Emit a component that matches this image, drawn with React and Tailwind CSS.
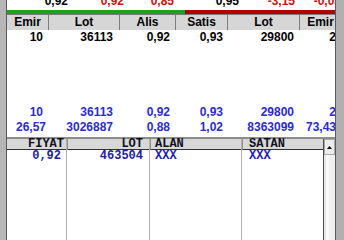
import React from "react";

const sans = { fontFamily: '"Liberation Sans", Arial, sans-serif' };
const mono = { fontFamily: '"Liberation Mono", "Courier New", monospace' };

const cols = [42, 71, 56, 52, 72, 42];
const pads = [6, 7, 6, 5, 6, 6];
const heads = ["Emir", "Lot", "Alis", "Satis", "Lot", "Emir"];

function DataRow({ values, color, extraPad = [] }) {
  return (
    <div className="flex h-[15px] leading-[15px] shrink-0">
      {values.map((v, i) => (
        <div
          key={i}
          className="shrink-0 text-right whitespace-nowrap overflow-hidden"
          style={{ width: cols[i], paddingRight: pads[i] - (extraPad[i] || 0), color }}
        >
          {v}
        </div>
      ))}
    </div>
  );
}

export default function App() {
  const top = [
    ["0,92", 61, "#000000"],
    ["0,92", 56, "#d01010"],
    ["0,85", 50, "#d01010"],
    ["0,95", 65, "#000000"],
    ["-3,15", 56, "#d01010"],
    ["-0,03", 46, "#d01010"],
  ];
  return (
    <div className="w-[344px] h-[240px] flex bg-white overflow-hidden">
      <div className="w-[7px] h-full bg-[#b6b6b6] border-r border-[#5a5a5a] shrink-0" />
      <div className="w-[328px] h-full flex flex-col overflow-hidden shrink-0 text-[12px] font-bold" style={sans}>
        <div className="h-[8px] flex items-end overflow-hidden shrink-0">
          {top.map(([t, w, c], i) => (
            <div key={i} className="shrink-0 text-right leading-[14px] whitespace-nowrap" style={{ width: w, color: c }}>
              {t}
            </div>
          ))}
        </div>
        <div className="h-[2px] shrink-0" />
        <div className="h-[4px] flex shrink-0">
          <div className="w-[178px] bg-[#1ea01e] shrink-0" />
          <div className="w-[1px] bg-[#303030] shrink-0" />
          <div className="flex-1 bg-[#b00000]" />
        </div>
        <div className="h-[1px] bg-[#7a7a7a] shrink-0" />
        <div className="flex h-[15px] leading-[15px] shrink-0">
          {heads.map((h, i) => (
            <div
              key={i}
              className="shrink-0 text-center bg-[#d6d6d6] border-r border-[#7c7c7c] text-black whitespace-nowrap overflow-hidden"
              style={{ width: cols[i] }}
            >
              {h}
            </div>
          ))}
        </div>
        <DataRow values={["10", "36113", "0,92", "0,93", "29800", "2"]} color="#000000" />
        <div className="h-[60px] shrink-0" />
        <DataRow values={["10", "36113", "0,92", "0,93", "29800", "2"]} color="#2b2bd0" />
        <DataRow values={["26,57", "3026887", "0,88", "1,02", "8363099", "73,43"]} color="#2b2bd0" extraPad={[3]} />
        <div className="h-[2px] shrink-0" />
        <div className="flex-1 flex flex-col border-t-2 border-[#8c8c8c] text-[12px] font-bold" style={mono}>
          <div className="flex flex-1">
            <div className="w-[60px] shrink-0 flex flex-col border-r border-[#b0b0b0]">
              <div className="h-[11px] leading-[11px] bg-[#d8d8d8] border-b border-[#303030] text-right pr-[2px] text-[#101020]">FIYAT</div>
              <div className="leading-[13px] text-right pr-[5px] text-[#1c1ca8]">0,92</div>
            </div>
            <div className="w-[83px] shrink-0 flex flex-col border-r border-[#b0b0b0]">
              <div className="h-[11px] leading-[11px] bg-[#d8d8d8] border-b border-[#303030] border-l border-l-[#909090] text-right pr-[6px] text-[#101020]">LOT</div>
              <div className="leading-[13px] text-right pr-[6px] text-[#1c1ca8]">463504</div>
            </div>
            <div className="w-[92px] shrink-0 flex flex-col border-r border-[#b0b0b0]">
              <div className="h-[11px] leading-[11px] bg-[#d8d8d8] border-b border-[#303030] border-l border-l-[#909090] pl-[4px] text-[#101020]">ALAN</div>
              <div className="leading-[13px] pl-[5px] text-[#1c1ca8]">XXX</div>
            </div>
            <div className="w-[82px] shrink-0 flex flex-col border-r border-[#4a4a4a]">
              <div className="h-[11px] leading-[11px] bg-[#d8d8d8] border-b border-[#303030] border-l border-l-[#909090] pl-[6px] text-[#101020]">SATAN</div>
              <div className="leading-[13px] pl-[7px] text-[#1c1ca8]">XXX</div>
            </div>
            <div className="w-[11px] shrink-0 flex flex-col bg-[#f0f0f0]">
              <div className="h-[16px] bg-[#ececec] border border-[#a8a8a8] flex items-center justify-center">
                <svg width="5" height="3" viewBox="0 0 5 3"><path d="M2.5 0 L5 3 L0 3 Z" fill="#000" /></svg>
              </div>
              <div className="flex-1 flex">
                <div className="w-[2px] bg-[#e6e6e6]" />
                <div className="w-[3px] bg-[#fafafa]" />
                <div className="flex-1 bg-[#f0f0f0]" />
              </div>
            </div>
          </div>
        </div>
      </div>
      <div className="w-[9px] h-full bg-[#b0b0b0] border-l border-[#5a5a5a] shrink-0" />
    </div>
  );
}
